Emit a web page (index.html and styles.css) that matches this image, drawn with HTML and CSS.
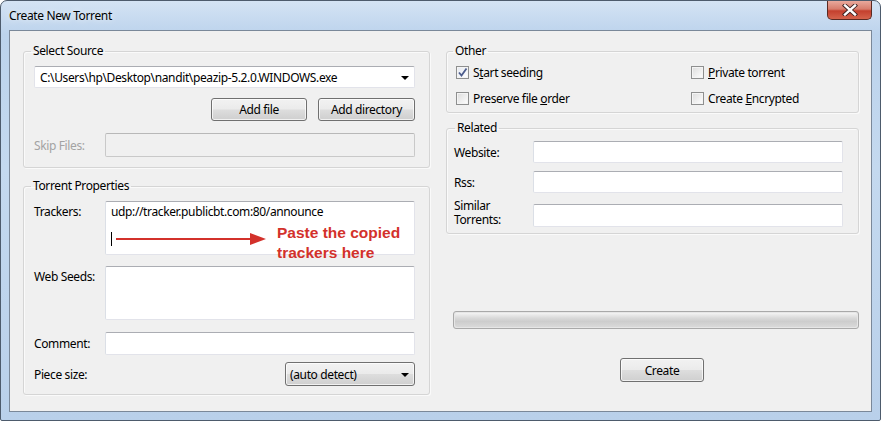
FILE: index.html
```html
<!DOCTYPE html>
<html>
<head>
<meta charset="utf-8">
<link rel="stylesheet" href="styles.css">
</head>
<body>
<div class="window">
  <div class="titlebar">
    <span class="title">Create New Torrent</span>
    <div class="close">
      <svg width="18" height="12" viewBox="0 0 18 12"><path d="M4 1.5 L14 10.5 M14 1.5 L4 10.5" stroke="#3a2020" stroke-width="4.2" stroke-linecap="square"/><path d="M4 1.5 L14 10.5 M14 1.5 L4 10.5" stroke="#ffffff" stroke-width="2.4" stroke-linecap="square"/></svg>
    </div>
  </div>
  <div class="client">
    <div class="col col-left">
      <fieldset class="group g-source">
        <legend>Select Source</legend>
        <div class="combo edit">
          <span class="combo-text">C:\Users\hp\Desktop\nandit\peazip-5.2.0.WINDOWS.exe</span>
          <span class="arrow"></span>
        </div>
        <div class="btnrow">
          <button class="btn btn-file">Add file</button>
          <button class="btn btn-dir">Add directory</button>
        </div>
        <div class="row row-skip">
          <span class="lbl disabled">Skip Files:</span>
          <div class="input input-disabled"></div>
        </div>
      </fieldset>
      <fieldset class="group g-props">
        <legend>Torrent Properties</legend>
        <div class="row row-area">
          <span class="lbl lbl-top">Trackers:</span>
          <div class="input area trackers">
            <div class="area-line">udp://tracker.publicbt.com:80/announce</div>
            <div class="annot-row">
              <span class="caret"></span>
              <svg class="arrow-line" width="150" height="14" viewBox="0 0 150 14"><line x1="0" y1="7" x2="136" y2="7" stroke="#d3312b" stroke-width="2"/><polygon points="134,1 150,7 134,13" fill="#d3312b"/></svg>
              <span class="annot">Paste the copied<br>trackers here</span>
            </div>
          </div>
        </div>
        <div class="row row-area row-seeds">
          <span class="lbl lbl-top">Web Seeds:</span>
          <div class="input area"></div>
        </div>
        <div class="row row-comment">
          <span class="lbl">Comment:</span>
          <div class="input"></div>
        </div>
        <div class="row row-piece">
          <span class="lbl">Piece size:</span>
          <div class="combo dropdown">
            <span class="combo-text">(auto detect)</span>
            <span class="arrow"></span>
          </div>
        </div>
      </fieldset>
    </div>
    <div class="col col-right">
      <fieldset class="group g-other">
        <legend>Other</legend>
        <div class="checks">
          <label class="check"><span class="box checked"><svg width="11" height="11" viewBox="0 0 11 11"><path d="M2 5.5 L4.5 8.5 L9.5 1.5" fill="none" stroke="#4c5c8c" stroke-width="1.8"/></svg></span><span class="ctext">S<u>t</u>art seeding</span></label>
          <label class="check"><span class="box"></span><span class="ctext"><u>P</u>rivate torrent</span></label>
          <label class="check"><span class="box"></span><span class="ctext">Preserve file <u>o</u>rder</span></label>
          <label class="check"><span class="box"></span><span class="ctext">Create <u>E</u>ncrypted</span></label>
        </div>
      </fieldset>
      <fieldset class="group g-related">
        <legend>Related</legend>
        <div class="rrow rrow-first">
          <span class="rlbl">Website:</span>
          <div class="input rinput"></div>
        </div>
        <div class="rrow">
          <span class="rlbl">Rss:</span>
          <div class="input rinput"></div>
        </div>
        <div class="rrow rrow-sim">
          <span class="rlbl two">Similar<br>Torrents:</span>
          <div class="input rinput"></div>
        </div>
      </fieldset>
      <div class="progress"><div class="progress-fill"></div></div>
      <button class="btn btn-create">Create</button>
    </div>
  </div>
</div>
</body>
</html>
```
FILE: styles.css
```css
html, body {
  margin: 0;
  padding: 0;
  background: #ffffff;
}
body {
  width: 881px;
  height: 421px;
  overflow: hidden;
  font-family: "Noto Sans", "Open Sans", sans-serif;
  font-size: 12px;
  letter-spacing: -0.37px;
  color: #000;
}
.window {
  box-sizing: border-box;
  width: 881px;
  height: 421px;
  padding: 0 8px 8px 8px;
  display: flex;
  flex-direction: column;
  border: 1px solid #4d5b6c;
  border-radius: 7px 7px 2px 2px;
  background: linear-gradient(180deg, #d4e3f4 0%, #bcd3ec 8%, #c4d9ef 40%, #b9d0ea 100%);
}
.titlebar {
  height: 29px;
  display: flex;
  align-items: flex-start;
  justify-content: space-between;
}
.title {
  margin-top: 6px;
  font-size: 12px;
  color: #000;
  text-shadow: 0 0 6px rgba(255,255,255,0.9);
}
.close {
  width: 45px;
  height: 19px;
  box-sizing: border-box;
  border: 1px solid #5a2a22;
  border-top: none;
  border-radius: 0 0 5px 5px;
  background: linear-gradient(180deg, #e9a99c 0%, #d77c6c 45%, #c4402e 55%, #d5634c 100%);
  display: flex;
  align-items: center;
  justify-content: center;
}
.close svg { display: block; }
.client {
  flex: 1;
  box-sizing: border-box;
  border: 1px solid #7a8899;
  background: #f0f0f0;
  padding: 12px 12px 0 13px;
  display: flex;
  gap: 16px;
}
.col { display: flex; flex-direction: column; }
.col-left { width: 408px; }
.col-right { width: 414px; }

.group {
  margin: 0;
  border: 1px solid #d5d5d5;
  border-radius: 3px;
  box-shadow: inset 1px 1px 0 #fafafa, 1px 1px 0 #fafafa;
  min-inline-size: 0;
}
.group legend {
  padding: 0 2px;
  margin-left: -3px;
  line-height: 16px;
  font-size: 12px;
}
.g-source { padding: 0 14px 10px 10px; }
.g-props { padding: 0 14px 8px 10px; margin-top: 10px; }

.input {
  box-sizing: border-box;
  height: 23px;
  background: #fff;
  border: 1px solid #e2e3ea;
  border-top-color: #abadb3;
  border-left-color: #dbdfe6;
  border-radius: 2px;
}
.input-disabled {
  background: #f0f0f0;
  border-color: #c9c9c9;
  border-top-color: #b8b8b8;
}
.combo {
  box-sizing: border-box;
  height: 22px;
  display: flex;
  align-items: center;
  justify-content: space-between;
  border-radius: 2px;
}
.combo.edit {
  margin-top: 7px;
  background: #fff;
  border: 1px solid #e2e3ea;
  border-top-color: #abadb3;
  padding: 0 5px 0 5px;
}
.combo.dropdown {
  width: 130px;
  height: 24px;
  border: 1px solid #707070;
  border-radius: 3px;
  background: linear-gradient(180deg, #f2f2f2 0%, #ebebeb 48%, #dddddd 52%, #cfcfcf 100%);
  box-shadow: inset 0 0 0 1px rgba(255,255,255,0.7);
  padding: 0 5px 0 4px;
}
.arrow {
  width: 0;
  height: 0;
  border-left: 4px solid transparent;
  border-right: 4px solid transparent;
  border-top: 4px solid #000;
  margin-top: 1px;
}
.btnrow {
  display: flex;
  justify-content: flex-end;
  gap: 11px;
  margin-top: 10px;
}
.btn {
  box-sizing: border-box;
  height: 23px;
  font-family: inherit;
  font-size: 12px;
  letter-spacing: -0.37px;
  color: #000;
  border: 1px solid #707070;
  border-radius: 3px;
  background: linear-gradient(180deg, #f2f2f2 0%, #ebebeb 48%, #dddddd 52%, #cfcfcf 100%);
  box-shadow: inset 0 0 0 1px rgba(255,255,255,0.7);
  padding: 0;
}
.btn-file { width: 96px; }
.btn-dir { width: 97px; }

.row {
  display: flex;
  align-items: center;
  justify-content: space-between;
}
.lbl { width: 71px; flex: none; }
.row .input { flex: 1; }
.row-skip { margin-top: 12px; }
.row-skip .input { height: 24px; }
.disabled { color: #a3a3a3; }
.lbl-top { align-self: flex-start; padding-top: 2px; }
.row-area { margin-top: 7px; }
.row-seeds { margin-top: 11px; }
.area { height: 54px; }
.row-comment { margin-top: 12px; }
.row-piece { margin-top: 7px; }

.trackers {
  position: relative;
  padding: 2px 5px;
}
.area-line { line-height: 16px; }
.annot-row {
  position: relative;
  height: 34px;
}
.caret {
  position: absolute;
  left: 0;
  top: 12px;
  width: 1px;
  height: 14px;
  background: #000;
}
.arrow-line {
  position: absolute;
  left: 5px;
  top: 12px;
}
.annot {
  position: absolute;
  left: 166px;
  top: 3px;
  font-family: "Liberation Sans", Arial, sans-serif;
  font-weight: bold;
  font-size: 15.5px;
  letter-spacing: 0;
  line-height: 20px;
  color: #d3312b;
}

.g-other { padding: 0 10px 6px 9px; }
.checks {
  display: grid;
  grid-template-columns: 235px 1fr;
  row-gap: 10px;
  margin-top: 5px;
}
.check {
  display: flex;
  align-items: center;
  height: 16px;
  gap: 4px;
}
.box {
  box-sizing: border-box;
  width: 13px;
  height: 13px;
  border: 1px solid #8e8f8f;
  background: linear-gradient(135deg, #dcdcdc 0%, #f4f4f4 70%, #ffffff 100%);
  box-shadow: inset 0 0 0 1px #f4f4f4;
  display: flex;
  align-items: center;
  justify-content: center;
}
.box.checked { background: linear-gradient(135deg, #e4e8f0 0%, #ffffff 100%); }
.box svg { display: block; }

.g-related { margin-top: 7px; padding: 0 15px 6px 7px; }
.g-related legend { margin-left: 1px; }
.rrow {
  display: flex;
  align-items: center;
}
.rrow-first { margin-top: 5px; }
.rrow + .rrow { margin-top: 8px; }
.rrow-sim { align-items: flex-end; }
.rrow + .rrow-sim { margin-top: 6px; }
.rlbl { width: 79px; flex: none; }
.rlbl.two { line-height: 14px; }
.rinput { flex: 1; height: 22px; }
.rrow-sim .rinput { height: 23px; }

.progress {
  box-sizing: border-box;
  margin-top: 77px;
  margin-left: 7px;
  width: 406px;
  height: 18px;
  border: 1px solid #a9a9a9;
  border-radius: 3px;
  background: #e6e6e6;
  padding: 1px;
}
.progress-fill {
  height: 100%;
  border-radius: 2px;
  background: linear-gradient(180deg, #f3f3f3 0%, #dadada 35%, #cdcdcd 60%, #d9d9d9 100%);
}
.btn-create {
  margin-top: 29px;
  margin-left: 174px;
  width: 84px;
  height: 24px;
}
```
